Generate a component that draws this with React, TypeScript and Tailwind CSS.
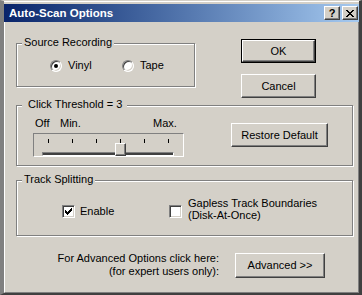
import React from "react";

const face = "bg-[#d4d0c8]";

function Btn({
  children,
  className = "",
  isDefault = false,
}: {
  children: React.ReactNode;
  className?: string;
  isDefault?: boolean;
}) {
  return (
    <button
      className={`flex ${face} p-0 ${isDefault ? "border border-black" : ""} ${className}`}
    >
      <span className="flex h-full w-full items-center justify-center border border-t-white border-l-white border-b-[#404040] border-r-[#404040] shadow-[inset_-1px_-1px_0_#808080]">
        {children}
      </span>
    </button>
  );
}

function Group({
  label,
  labelClass = "pl-[2px] pr-[2px]",
  className = "",
  children,
}: {
  label: string;
  labelClass?: string;
  className?: string;
  children?: React.ReactNode;
}) {
  return (
    <div
      className={`relative border border-[#808080] shadow-[inset_1px_1px_0_#fff,1px_1px_0_#fff] ${className}`}
    >
      <span className={`absolute -top-[8px] left-[5px] ${face} ${labelClass}`}>{label}</span>
      {children}
    </div>
  );
}

function Radio({ checked, label }: { checked?: boolean; label: string }) {
  return (
    <div className="flex w-[72px] items-center gap-[6px]">
      <span className="flex h-[12px] w-[12px] items-center justify-center rounded-full border border-t-[#808080] border-l-[#808080] border-b-white border-r-white bg-white shadow-[inset_1px_1px_0_#404040,inset_-1px_-1px_0_#d4d0c8]">
        {checked && <span className="h-[4px] w-[4px] rounded-full bg-black" />}
      </span>
      <span>{label}</span>
    </div>
  );
}

function Check({ checked }: { checked?: boolean }) {
  return (
    <span className="flex h-[13px] w-[13px] shrink-0 border border-t-[#808080] border-l-[#808080] border-b-white border-r-white bg-white shadow-[inset_1px_1px_0_#404040,inset_-1px_-1px_0_#d4d0c8]">
      {checked && (
        <svg width="11" height="11" viewBox="0 0 11 11" shapeRendering="crispEdges">
          {[2, 3, 4, 3, 2, 1, 0].map((r, i) => (
            <rect key={i} x={2 + i} y={2 + r} width="1" height="3" fill="#000" />
          ))}
        </svg>
      )}
    </span>
  );
}

function Slider() {
  return (
    <div className="relative h-[24px] w-[151px] border border-t-[#808080] border-l-[#808080] border-b-white border-r-white">
      <div className="flex gap-[23px] pl-[14px] pt-[5px]">
        {[0, 1, 2, 3, 4, 5].map((i) => (
          <span key={i} className="h-[4px] w-[1px] bg-black" />
        ))}
      </div>
      <div className="ml-[8px] mt-[9px] h-[4px] w-[132px] border border-t-[#808080] border-l-[#808080] border-b-white border-r-white bg-[#404040]" />
      {/* thumb */}
      <span className="absolute left-[81px] top-[9px] h-[13px] w-[11px] border border-t-white border-l-white border-b-[#404040] border-r-[#404040] bg-[#d4d0c8] shadow-[inset_-1px_-1px_0_#808080]" />
    </div>
  );
}

export default function App() {
  return (
    <div className="flex h-[295px] w-[362px] flex-col overflow-hidden border-t border-l-[4px] border-r-[3px] border-b-[2px] border-t-[#d4d0c8] border-l-[#808080] border-r-[#404040] border-b-[#404040] bg-[#d4d0c8] pt-[3px] font-['Liberation_Sans',Arial,sans-serif] text-[11px] leading-[13px] text-black shadow-[inset_0_1px_0_#fff]">
      {/* Title bar */}
      <div className="flex h-[18px] items-center bg-linear-to-r from-[#0a246a] to-[#a6caf0] pl-[5px] pr-[1px]">
        <span className="flex-1 text-[11.5px] font-bold text-white">Auto-Scan Options</span>
        <Btn className="h-[14px] w-[16px] text-[11px] font-bold leading-none">?</Btn>
        <Btn className="ml-[2px] h-[14px] w-[16px]">
          <svg width="8" height="7" viewBox="0 0 8 7" shapeRendering="crispEdges">
            <path d="M0 0h2v1h-2zM6 0h2v1h-2zM1 1h2v1h-2zM5 1h2v1h-2zM2 2h4v1h-4zM3 3h2v1h-2zM2 4h4v1h-4zM1 5h2v1h-2zM5 5h2v1h-2zM0 6h2v1h-2zM6 6h2v1h-2z" fill="#000" />
          </svg>
        </Btn>
      </div>

      {/* Body */}
      <div className="flex flex-1 flex-col border-l border-b border-r border-l-white border-b-[#808080] border-r-[#808080] pl-[11px] pt-[17px]">
        <div className="flex items-start">
          <Group label="Source Recording" className="mt-[4px] h-[44px] w-[179px]">
            <div className="flex pl-[33px] pt-[15px]">
              <Radio checked label="Vinyl" />
              <Radio label="Tape" />
            </div>
          </Group>
          <div className="ml-[46px] flex flex-col gap-[11px]">
            <Btn isDefault className="h-[24px] w-[75px]">OK</Btn>
            <Btn className="h-[24px] w-[75px]">Cancel</Btn>
          </div>
        </div>

        <Group
          label="Click Threshold = 3"
          labelClass="pl-[6px] pr-[5px]"
          className="mt-[7px] flex h-[61px] w-[337px] items-start"
        >
          <div className="pl-[16px] pt-[11px]">
            <div className="flex pl-[2px]">
              <span className="w-[25px]">Off</span>
              <span className="w-[93px]">Min.</span>
              <span>Max.</span>
            </div>
            <div className="mt-[3px]">
              <Slider />
            </div>
          </div>
          <Btn className="ml-[47px] mt-[17px] h-[24px] w-[97px]">Restore Default</Btn>
        </Group>

        <Group label="Track Splitting" className="mt-[14px] flex h-[56px] w-[337px] items-start pl-[45px] pt-[24px]">
          <div className="flex w-[107px] items-center gap-[5px]">
            <Check checked />
            <span>Enable</span>
          </div>
          <div className="flex items-start gap-[6px]">
            <Check />
            <span className="-mt-[8px] leading-[12px]">
              Gapless Track Boundaries
              <br />
              (Disk-At-Once)
            </span>
          </div>
        </Group>

        <div className="mt-[17px] flex items-start">
          <div className="-mt-[1px] w-[203px] text-right">
            For Advanced Options click here:
            <br />
            (for expert users only):
          </div>
          <Btn className="ml-[16px] h-[25px] w-[90px]">Advanced &gt;&gt;</Btn>
        </div>
      </div>
    </div>
  );
}
